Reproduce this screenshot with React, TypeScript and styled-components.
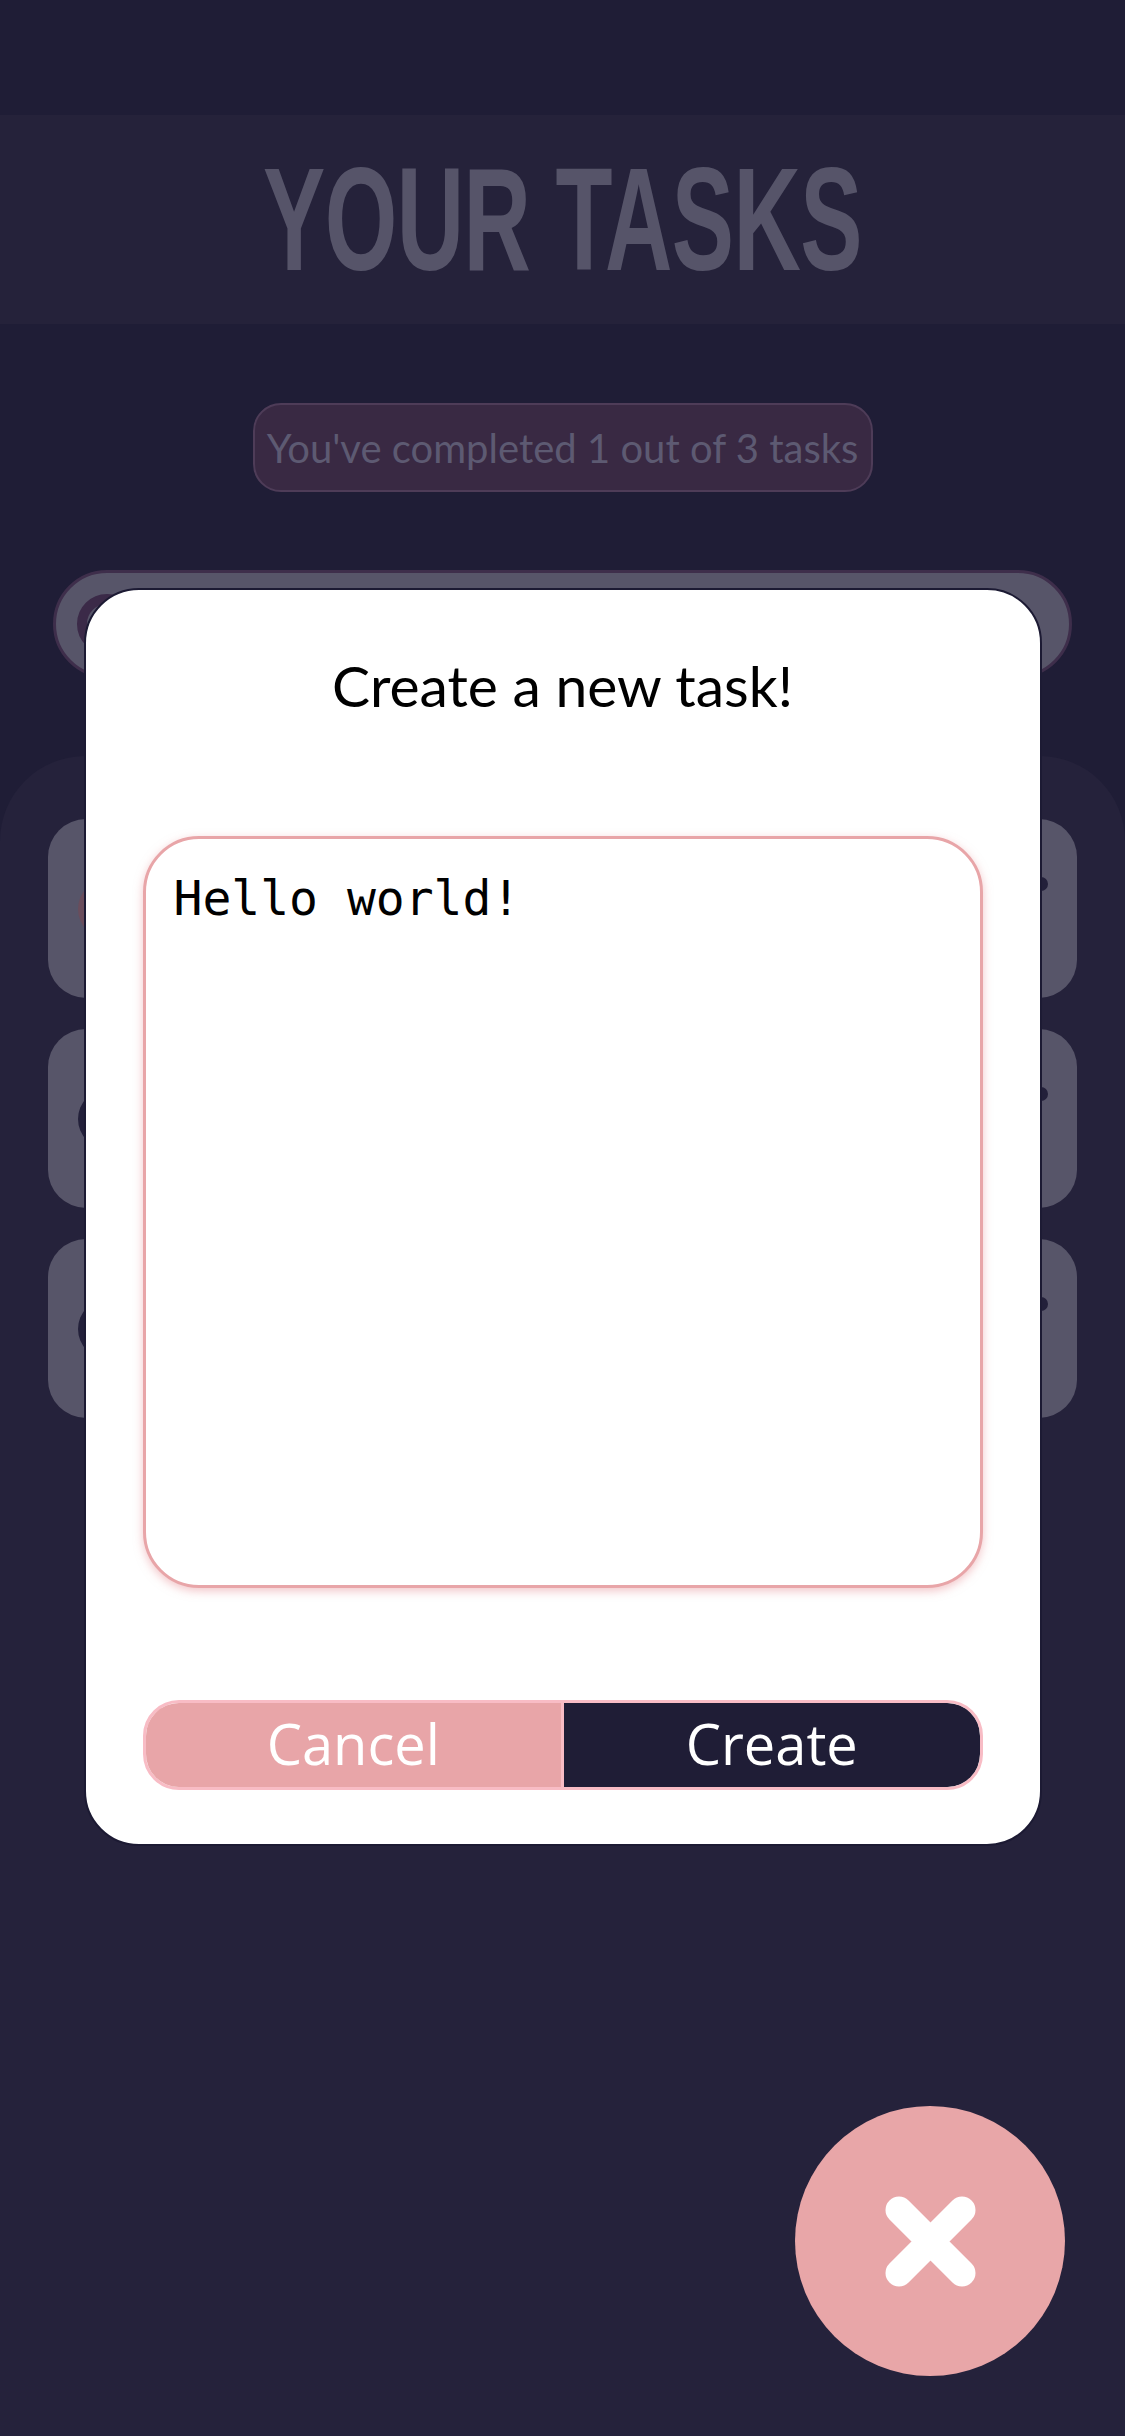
import React from "react";
import styled, { createGlobalStyle } from "styled-components";

const GlobalStyle = createGlobalStyle`
  html, body {
    margin: 0;
    padding: 0;
    background: #1f1d36;
  }
  * { box-sizing: border-box; }
`;

const Page = styled.div`
  min-height: 2436px;
  display: flex;
  flex-direction: column;
  background: #1f1d36;
`;

const TopBar = styled.div`
  height: 115px;
`;

const HeaderBand = styled.header`
  height: 209px;
  background: #25223a;
  display: flex;
  align-items: center;
  justify-content: center;
`;

const Title = styled.h1`
  margin: 0;
  font-family: "Liberation Sans", Arial, sans-serif;
  font-weight: 700;
  font-size: 147px;
  line-height: 1;
  color: #565469;
  letter-spacing: -1px;
  transform: scaleX(0.635);
  white-space: nowrap;
`;

const BadgeRow = styled.div`
  display: flex;
  justify-content: center;
  margin-top: 79px;
`;

const Badge = styled.div`
  height: 89px;
  width: 620px;
  display: flex;
  align-items: center;
  justify-content: center;
  background: #392943;
  border: 2px solid #4e3c58;
  border-radius: 28px;
  font-family: Lato, "Open Sans", sans-serif;
  font-size: 40px;
  color: #5d5a72;
  white-space: nowrap;
`;

const SearchBar = styled.div`
  margin: 78px 53px 0;
  height: 108px;
  border-radius: 54px;
  background: #575569;
  border: 3px solid #3e2e4b;
  display: flex;
  align-items: center;
  padding-left: 21px;
`;

const SearchRing = styled.div`
  width: 60px;
  height: 60px;
  border-radius: 50%;
  border: 10px solid #3b2a48;
`;

const Panel = styled.section`
  flex: 1;
  margin-top: 78px;
  background: #25223b;
  border-radius: 85px 85px 0 0;
  padding: 63px 48px 0;
  display: flex;
  flex-direction: column;
  gap: 31px;
`;

const Card = styled.div`
  height: 179px;
  border-radius: 38px;
  background: #575569;
  display: flex;
  align-items: center;
  justify-content: space-between;
  padding: 0 29px 0 30px;
`;

const Check = styled.div<{ $done?: boolean }>`
  width: 60px;
  height: 60px;
  border-radius: 50%;
  background: ${(p) => (p.$done ? "#6a4d5c" : "#23203a")};
`;

const MenuDot = styled.div`
  width: 14px;
  height: 14px;
  border-radius: 50%;
  background: #23203a;
  align-self: flex-start;
  margin-top: 58px;
`;

const Backdrop = styled.div`
  position: fixed;
  inset: 0;
  display: flex;
  flex-direction: column;
  align-items: center;
  padding-top: 588px;
`;

const Modal = styled.div`
  width: 958px;
  height: 1258px;
  background: #ffffff;
  border: 2px solid #1c1a33;
  border-radius: 55px;
  display: flex;
  flex-direction: column;
  padding: 62px 57px 0;
`;

const ModalTitle = styled.h2`
  margin: 0;
  text-align: center;
  font-family: Lato, "Open Sans", sans-serif;
  font-weight: 400;
  font-size: 57px;
  line-height: 66px;
  color: #000000;
`;

const TaskInput = styled.textarea`
  margin-top: 118px;
  height: 752px;
  width: 100%;
  resize: none;
  outline: none;
  border: 3px solid #e8a5a8;
  border-radius: 56px;
  box-shadow: 0 3px 10px rgba(232, 150, 155, 0.55);
  padding: 31px 28px;
  font-family: "DejaVu Sans Mono", "Liberation Mono", monospace;
  font-size: 48px;
  line-height: normal;
  color: #000000;
  background: #ffffff;
`;

const ButtonGroup = styled.div`
  margin-top: 112px;
  height: 90px;
  display: flex;
  border: 3px solid #f8bcc5;
  border-radius: 36px;
  overflow: hidden;
`;

const ActionButton = styled.button<{ $primary?: boolean }>`
  flex: 1;
  border: none;
  margin: 0;
  padding: 0 0 4px;
  font-family: "Open Sans", "Noto Sans", sans-serif;
  font-size: 56px;
  font-weight: 400;
  color: #ffffff;
  background: ${(p) => (p.$primary ? "#1f1d36" : "#e8a5a8")};
  border-left: ${(p) => (p.$primary ? "3px solid #f8bcc5" : "none")};
  border-radius: ${(p) => (p.$primary ? "0 32px 32px 0" : "0")};
  cursor: pointer;
`;

const Fab = styled.button`
  position: fixed;
  right: 60px;
  bottom: 60px;
  width: 270px;
  height: 270px;
  border-radius: 50%;
  border: none;
  background: #e8a6a8;
  display: flex;
  align-items: center;
  justify-content: center;
  padding: 0;
  cursor: pointer;
`;

export default function App() {
  return (
    <>
      <GlobalStyle />
      <Page>
        <TopBar />
        <HeaderBand>
          <Title>YOUR TASKS</Title>
        </HeaderBand>
        <BadgeRow>
          <Badge>You've completed 1 out of 3 tasks</Badge>
        </BadgeRow>
        <SearchBar>
          <SearchRing />
        </SearchBar>
        <Panel>
          {[true, false, false].map((done, i) => (
            <Card key={i}>
              <Check $done={done} />
              <MenuDot />
            </Card>
          ))}
        </Panel>
      </Page>
      <Backdrop>
        <Modal>
          <ModalTitle>Create a new task!</ModalTitle>
          <TaskInput defaultValue="Hello world!" spellCheck={false} />
          <ButtonGroup>
            <ActionButton>Cancel</ActionButton>
            <ActionButton $primary>Create</ActionButton>
          </ButtonGroup>
        </Modal>
      </Backdrop>
      <Fab aria-label="Close">
        <svg width="91" height="91" viewBox="0 0 91 91">
          <path
            d="M14 14 L77 77 M77 14 L14 77"
            stroke="#ffffff"
            strokeWidth="27"
            strokeLinecap="round"
            fill="none"
          />
        </svg>
      </Fab>
    </>
  );
}
